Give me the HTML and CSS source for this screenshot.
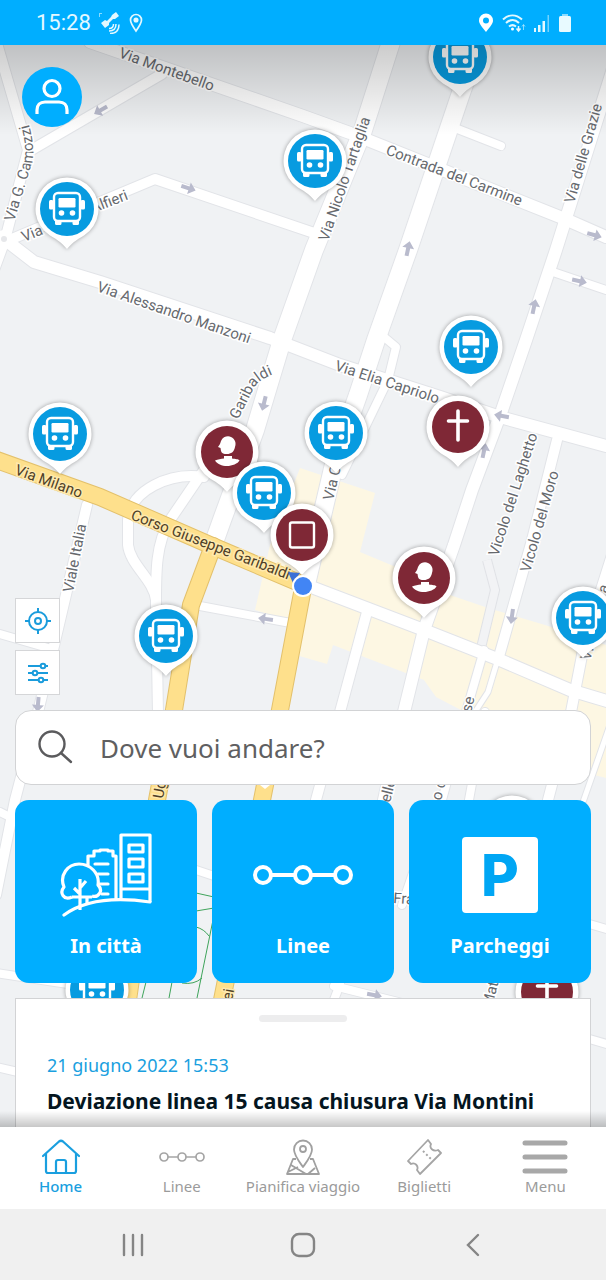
FILE: index.html
```html
<!DOCTYPE html>
<html lang="it">
<head>
  <meta charset="UTF-8" />
  <meta name="viewport" content="width=device-width, initial-scale=1.0"/>
  <title>Home - Mappa</title>
  <link rel="stylesheet" href="styles.css">
</head>
<body>

<header class="status-bar">
  <span class="time">15:28</span>
  <svg width="22" height="22" viewBox="0 0 22 22" fill="none" stroke="#e3f8ff" stroke-width="1.5">
    <g fill="#e3f8ff" stroke="none">
      <path d="M2 11l4-3 2 1 4-4 1-2 4-3 3 4-4 3-2 0-4 4 0 2-4 3z"/>
      <path d="M0 1h3v1H1v3H0z" opacity=".6"/>
    </g>
    <path d="M10 16.500c3 0 4.500-1.500 4.500-4.500M10 19c4.500 0 7-2.500 7-7M11 21.500c5.500 0 9-3 9-9"/>
  </svg>
  <svg width="14" height="20" viewBox="0 0 14 20" fill="none" stroke="#e3f8ff" stroke-width="1.700">
    <path d="M7 18C3.500 13 1.500 10 1.500 7a5.500 5.500 0 0 1 11 0c0 3-2 6-5.500 11z"/>
    <circle cx="7" cy="7" r="1.700" fill="#e3f8ff"/>
  </svg>
  <span class="spacer"></span>
  <svg width="16" height="20" viewBox="0 0 16 20">
    <path fill="#fff" fill-rule="evenodd" d="M8 19C3.500 13.500 1 10.500 1 7.500a7 7 0 0 1 14 0c0 3-2.500 6-7 11.500zM8 4.500a3 3 0 1 0 0 6 3 3 0 0 0 0-6z"/>
  </svg>
  <svg width="24" height="20" viewBox="0 0 24 20" fill="none" stroke="#e3f8ff" stroke-width="2">
    <path d="M1 6.500c6-5.500 13-5.500 19 0M4 10c4.500-4 9-4 13 0M7 13.500c2.500-2 4.500-2 7 0"/>
    <circle cx="10.500" cy="16" r="1.500" fill="#fff" stroke="none"/>
    <path d="M16.500 13v4M14.500 15.500l2 2.500 2-2.500" stroke-width="1.500"/>
    <path d="M21.500 17v-5M20 13.500l1.500-2 1.500 2" stroke-width="1" opacity=".6"/>
  </svg>
  <svg width="16" height="18" viewBox="0 0 16 18" fill="#e3f8ff">
    <path d="M0 14h2v4H0zM4 11h2.500v7H4zM8.500 7H11v11H8.500z"/>
    <path d="M13.500 1H15v17h-1.500z" opacity=".5"/>
  </svg>
  <svg width="14" height="20" viewBox="0 0 14 20" fill="#e8faff">
    <path d="M4 1h6v2H4z" opacity=".6"/>
    <rect x="1" y="3" width="12" height="16" rx="1.500"/>
  </svg>
</header>

<main class="map-screen">
  <svg class="map" viewBox="0 45 606 1082" preserveAspectRatio="xMidYMin slice" role="img" aria-label="Mappa">
    <defs>
      <g id="roads">
        <path class="r12" d="M90 42L303 116 350 133 565 219 606 237"/>
        <path class="r10" d="M-4 40L28 150 5 240-6 270"/>
        <path class="r10" d="M28 152L162 74"/>
        <path class="r10" d="M0 244L155 179 320 235"/>
        <path class="r12" d="M3 238L34 262 100 282 270 338 340 365 440 397 500 417 606 446"/>
        <path class="r18" d="M391 42L363 130 314 250 282 340 255 430 222 520 212 548"/>
        <path class="r18" d="M480 40L462 90 408 250 376 340 358 395 335 460 307 580"/>
        <path class="r8" d="M384 337L396 347 388 380 342 475"/>
        <path class="r8" d="M455 128L501 146"/>
        <path class="r12" d="M622 40L556 250 526 340 502 410 472 490 454 545 424 630 404 712 384 800"/>
        <path class="r8" d="M553 272L606 290"/>
        <path class="r10" d="M87 505L53 650 38 712 15 800-4 895"/>
        <path class="r8" d="M0 634L48 648"/>
        <path class="r10" d="M204 477C170 472 130 490 128 520V545C130 565 154 580 156 600L158 715"/>
        <path class="r10" d="M204 470L170 520C155 545 156 575 156 610"/>
        <path class="r8" d="M200 606L296 624"/>
        <path class="r10" d="M367 612L340 712 316 800"/>
        <path class="r8" d="M484 650L466 712 442 800"/>
        <path class="r10" d="M557 440L532 540 498 660"/>
        <path class="r5" d="M497 662L488 692 475 712"/>
        <path class="r10" d="M612 555L585 640 571 712 548 800"/>
        <path class="r5" d="M610 725L582 805"/>
        <path class="r8" d="M485 712L469 800"/>
        <path class="r12" d="M306 585L424 630 500 660 570 690 610 702"/>
        <path class="r8" d="M0 812L8 816M190 868L214 876M-4 973L68 984M334 986L402 1003M586 923L610 930M-4 1067L18 1072M586 1038L610 1045"/>
        <path class="r8" d="M414 870L402 905M340 984L334 1000"/>
      </g>
      <g id="main-roads">
        <path class="r16" d="M213 546L191 605 174 710 157 800 128 1000"/>
        <path class="r16" d="M303 588L280 710 262 800 222 1000"/>
        <path class="r16" d="M-6 459L100 497 210 545 304 585"/>
      </g>
      <g id="arrow">
        <path d="M-7-2H1V-6L8 0 1 6V2H-7z" fill="#b9bbcd"/>
      </g>
      <g id="pin">
        <path d="M0 40C-4 35-9 31-17 26.500A31.500 31.500 0 1 1 17 26.500C9 31 4 35 0 40z" fill="#fff"/>
      </g>
      <g id="bus">
        <use href="#pin"/>
        <circle r="27" fill="#079be0"/>
        <g fill="#fff">
          <rect x="-13" y="-16" width="26" height="28" rx="4" fill="none" stroke="#fff" stroke-width="2.400"/>
          <rect x="-8.500" y="-11" width="17" height="9.500" rx="1.200"/>
          <rect x="-18" y="-9" width="4.500" height="9.500" rx="1.500"/>
          <rect x="13.500" y="-9" width="4.500" height="9.500" rx="1.500"/>
          <circle cx="-5.500" cy="4" r="2.800"/>
          <circle cx="5.500" cy="4" r="2.800"/>
          <path d="M-12 12h6.500v2.500q0 1.500-1.500 1.500h-3.500q-1.500 0-1.500-1.500zM5.500 12H12v2.500q0 1.500-1.500 1.500H7q-1.500 0-1.500-1.500z"/>
        </g>
      </g>
      <g id="bust">
        <use href="#pin"/>
        <circle r="26" fill="#7f2836"/>
        <path fill="#fff" d="M-6-11C-4-15.500 1-16.500 4-15 8-13 9.500-9 8-5 7 0 4 2 0 2-3 2-5.500 1.500-6-1L-6.500-4-9-5-7-8zM-3 4H5V6.500C8 7 12 7 12.500 8.500 11 11.500 5 14 0 14S-10 12-12 8.500C-9 7-6 7-3 6.500z"/>
      </g>
      <g id="church">
        <use href="#pin"/>
        <circle r="26" fill="#7f2836"/>
        <path d="M0-16V13M-9.500-6H9.500" stroke="#fff" stroke-width="3.600" stroke-linecap="round"/>
      </g>
      <g id="square">
        <use href="#pin"/>
        <circle r="26" fill="#7f2836"/>
        <rect x="-12" y="-12.500" width="24" height="25" rx="2" fill="none" stroke="#fff" stroke-width="2.400"/>
      </g>
      <path id="camozzi" d="M14 222L31 166Q37 150 27 118"/>
      <path id="garibaldi" d="M238 420L254 388Q258 380 274 374"/>
    </defs>

    <rect x="0" y="45" width="606" height="1082" fill="#f0f2f4"/>

    <!-- commercial areas -->
    <g fill="#fdf7e3">
      <path d="M270 545L300 468 375 493 360 552 403 570 450 595 488 608 545 625 606 645V778L575 770 540 745 480 720 436 697 424 680 333 645 327 664 296 655 303 625 255 610z"/>
    </g>
    <path d="M487 560L495 590 480 652" fill="none" stroke="#e0e2e6" stroke-width="10"/>
    <path d="M487 560L495 590 480 652" fill="none" stroke="#f2f3f5" stroke-width="8"/>

    <use href="#roads" class="casing"/>
    <use href="#roads" class="surface"/>
    <use href="#main-roads" class="main-casing"/>
    <use href="#main-roads" class="main-surface"/>
    <circle cx="4" cy="239" r="9" fill="#fff"/>
    <circle cx="4" cy="239" r="3" fill="#e6e7ea"/>

    <!-- footpaths -->
    <g fill="none" stroke="#3fa45b">
      <path d="M196 893L214 897M196 911L214 908M196 927Q204 929 209 936M213 920L197 998M202 978Q194 985 182 983M146 982L142 998M172 982L169 998"/>
    </g>

    <g>
      <use href="#arrow" transform="translate(101 110) rotate(150)"/>
      <use href="#arrow" transform="translate(188 188) rotate(18)"/>
      <use href="#arrow" transform="translate(408 249) rotate(-78)"/>
      <use href="#arrow" transform="translate(594 235) rotate(16)"/>
      <use href="#arrow" transform="translate(579 281) rotate(12)"/>
      <use href="#arrow" transform="translate(534 307) rotate(-78)"/>
      <use href="#arrow" transform="translate(502 416) rotate(190)"/>
      <use href="#arrow" transform="translate(484 451) rotate(-78)"/>
      <use href="#arrow" transform="translate(264 403) rotate(104)"/>
      <use href="#arrow" transform="translate(266 619) rotate(188)"/>
      <use href="#arrow" transform="translate(512 616) rotate(98)"/>
      <use href="#arrow" transform="translate(38 704) rotate(95)"/>
      <use href="#arrow" transform="translate(374 995) rotate(10)"/>
    </g>

    <g class="street">
      <text transform="translate(118 57) rotate(20)">Via Montebello</text>
      <text transform="translate(385 154) rotate(21)">Contrada del Carmine</text>
      <text transform="translate(328 242) rotate(-71)">Via Nicolo Tartaglia</text>
      <text transform="translate(574 204) rotate(-74)">Via delle Grazie</text>
      <text><textPath href="#camozzi">Via G. Camozzi</textPath></text>
      <text transform="translate(24 242) rotate(-22)">Via</text>
      <text transform="translate(93 213) rotate(-21)">Alfieri</text>
      <text transform="translate(96 291) rotate(19)">Via Alessandro Manzoni</text>
      <text><textPath href="#garibaldi">Garibaldi</textPath></text>
      <text transform="translate(334 370) rotate(18)">Via Elia Capriolo</text>
      <text transform="translate(73 593) rotate(-79)">Viale Italia</text>
      <text transform="translate(333 501) rotate(-77)">Via C.</text>
      <text transform="translate(498 557) rotate(-72)">Vicolo del Laghetto</text>
      <text transform="translate(530 573) rotate(-74)">Vicolo del Moro</text>
      <text transform="translate(607 594) rotate(-74)">a</text>
      <text transform="translate(590 661) rotate(-74)">Via</text>
      <text transform="translate(471 713) rotate(-76)">se</text>
      <text transform="translate(390 803) rotate(-76)">elle</text>
      <text transform="translate(441 801) rotate(-76)">o c</text>
      <text transform="translate(393 903) rotate(4)">Fra</text>
      <text transform="translate(492 1008) rotate(-76)">Mat</text>
    </g>
    <g class="street street-main">
      <text transform="translate(14 474) rotate(20)">Via Milano</text>
      <text transform="translate(130 519) rotate(21)">Corso Giuseppe Garibaldi</text>
      <text transform="translate(163 799) rotate(-80)">Ug</text>
      <text transform="translate(232 1001) rotate(-80)">ei</text>
    </g>

    <g class="pins">
      <a href="#" aria-label="Fermata"><use href="#bus" x="460" y="57"/></a>
      <a href="#" aria-label="Fermata"><use href="#bus" x="315" y="161"/></a>
      <a href="#" aria-label="Fermata"><use href="#bus" x="67" y="209"/></a>
      <a href="#" aria-label="Fermata"><use href="#bus" x="471" y="347"/></a>
      <a href="#" aria-label="Fermata"><use href="#bus" x="336" y="433"/></a>
      <a href="#" aria-label="Chiesa"><use href="#church" x="458" y="427"/></a>
      <a href="#" aria-label="Fermata"><use href="#bus" x="60" y="434"/></a>
      <a href="#" aria-label="Museo"><use href="#bust" x="227" y="452"/></a>
      <a href="#" aria-label="Fermata"><use href="#bus" x="264" y="493"/></a>
      <a href="#" aria-label="Piazza"><use href="#square" x="302" y="535"/></a>
      <a href="#" aria-label="Museo"><use href="#bust" x="424" y="578"/></a>
      <a href="#" aria-label="Fermata"><use href="#bus" x="583" y="618"/></a>
      <a href="#" aria-label="Fermata"><use href="#bus" x="166" y="636"/></a>
      <a href="#" aria-label="Fermata"><use href="#bus" x="512" y="827"/></a>
      <a href="#" aria-label="Fermata"><use href="#bus" x="97" y="990"/></a>
      <a href="#" aria-label="Chiesa"><use href="#church" x="547" y="992"/></a>
    </g>

    <!-- user position -->
    <path d="M288 572L300 573 293 583z" fill="#3b6fd6"/>
    <circle cx="303" cy="586" r="11" fill="#fff"/>
    <circle cx="303" cy="586" r="9" fill="#4285f4"/>
    <path d="M260 785L265 789 270 785z" fill="#fff"/>
  </svg>

  <button class="profile-btn" aria-label="Profilo">
    <svg width="36" height="38" viewBox="0 0 36 38" fill="none" stroke="#fff" stroke-width="3.200">
      <circle cx="18" cy="10.500" r="8"/>
      <path d="M3 36v-4c0-5 3-8 8-8h14c5 0 8 3 8 8v4"/>
    </svg>
  </button>

  <div class="panel">
    <div class="map-controls">
      <button aria-label="La mia posizione">
        <svg width="28" height="28" viewBox="0 0 28 28" fill="none" stroke="#1a9cdc" stroke-width="2">
          <circle cx="14" cy="14" r="9"/>
          <circle cx="14" cy="14" r="3"/>
          <path d="M14 1v5M14 22v5M1 14h5M22 14h5"/>
        </svg>
      </button>
      <button aria-label="Filtri">
        <svg width="22" height="22" viewBox="0 0 22 22" stroke="#1a9cdc" stroke-width="2" fill="#fff">
          <path d="M1 4h20M1 11h20M1 18h20"/>
          <circle cx="16" cy="4" r="2.300"/>
          <circle cx="8" cy="11" r="2.300"/>
          <circle cx="14" cy="18" r="2.300"/>
        </svg>
      </button>
    </div>

    <label class="search-box">
      <svg width="36" height="36" viewBox="0 0 36 36" fill="none" stroke="#5b5b5d" stroke-width="2.400" stroke-linecap="round">
        <circle cx="14" cy="14" r="12.500"/>
        <path d="M23 23l10 9"/>
      </svg>
      <input type="text" placeholder="Dove vuoi andare?" aria-label="Dove vuoi andare?">
    </label>

    <div class="tiles">
      <button class="tile">
        <span class="tile-icon">
          <svg width="92" height="84" viewBox="0 0 92 84" fill="none" stroke="#fff" stroke-width="3.200" stroke-linejoin="round">
            <path d="M61 66V2h29v67"/>
            <path d="M69 12h14v7H69zM69 26h14v8H69zM69 41h14v8H69zM61 56h29"/>
            <path d="M28 32V23h6v-5h6v-1h8v1h5v5h3v43"/>
            <path d="M35 31h13M38 41h10M40 51h8M42 61h6" stroke-linecap="round"/>
            <path d="M12 64C4 68-1 60 4 54-1 42 8 31 19 31S40 40 38 52C44 58 38 65 32 63"/>
            <path d="M20 77V46M20 61l-6-6M20 55l6-7M27 72v-9M12 64h20"/>
            <path d="M4 82C26 66 56 64 90 69" stroke-linecap="round"/>
          </svg>
        </span>
        <span>In città</span>
      </button>
      <button class="tile">
        <span class="tile-icon">
          <svg width="100" height="24" viewBox="0 0 100 24" fill="none" stroke="#fff" stroke-width="4">
            <circle cx="10" cy="12" r="8"/>
            <circle cx="50" cy="12" r="8"/>
            <circle cx="90" cy="12" r="8"/>
            <path d="M18 12h24M58 12h24"/>
          </svg>
        </span>
        <span>Linee</span>
      </button>
      <button class="tile">
        <span class="tile-icon"><span class="parking">P</span></span>
        <span>Parcheggi</span>
      </button>
    </div>

    <article class="news">
      <div class="handle"></div>
      <time datetime="2022-06-21T15:53">21 giugno 2022 15:53</time>
      <h2>Deviazione linea 15 causa chiusura Via Montini</h2>
    </article>
  </div>
</main>

<nav class="tab-bar">
  <a href="#" class="active">
    <svg width="38" height="36" viewBox="0 0 38 36" fill="none" stroke="#1a9fdf" stroke-width="2.200" stroke-linejoin="round" stroke-linecap="round">
      <path d="M4 15v17q0 2 2 2h26q2 0 2-2V15"/>
      <path d="M1 17L17 2.500q2-1.500 4 0L37 17"/>
      <path d="M14 34V23q0-2 2-2h6q2 0 2 2v11"/>
    </svg>
    Home
  </a>
  <a href="#">
    <svg width="46" height="36" viewBox="0 0 46 36" fill="none" stroke="#a5a5a5" stroke-width="1.700">
      <circle cx="5" cy="18" r="4"/>
      <circle cx="23" cy="18" r="4"/>
      <circle cx="41" cy="18" r="4"/>
      <path d="M9 18h10M27 18h10"/>
    </svg>
    Linee
  </a>
  <a href="#">
    <svg width="34" height="36" viewBox="0 0 34 36" fill="none" stroke="#a0a0a0" stroke-width="1.800" stroke-linejoin="round">
      <path d="M17 28C12 21 8 16 8 10.500a9 9 0 0 1 18 0C26 16 22 21 17 28z"/>
      <circle cx="17" cy="10" r="3"/>
      <path d="M10 20H7L1 35h32L27 20h-3M5 26l15 9M2 33l10-5M22 35l7-6"/>
    </svg>
    Pianifica viaggio
  </a>
  <a href="#">
    <svg width="36" height="36" viewBox="0 0 36 36" fill="none" stroke="#a5a5a5" stroke-width="1.800" stroke-linejoin="round">
      <path d="M22 1L2 22l3 3c4-2 8 2 6 6l3 4L35 14l-3-3c-5 2-9-2-7-6z"/>
      <path d="M17 12l8 8" stroke-width="2" stroke-dasharray="2 2.500"/>
    </svg>
    Biglietti
  </a>
  <a href="#">
    <svg width="46" height="36" viewBox="0 0 46 36" stroke="#a8a8a8" stroke-width="5" stroke-linecap="round">
      <path d="M3 4h40M3 18h40M3 32h40"/>
    </svg>
    Menu
  </a>
</nav>

<footer class="system-bar">
  <button aria-label="App recenti">
    <svg width="24" height="24" viewBox="0 0 24 24" stroke="#858585" stroke-width="2.400" stroke-linecap="round"><path d="M3 2v20M12 2v20M21 2v20"/></svg>
  </button>
  <button aria-label="Schermata principale">
    <svg width="26" height="26" viewBox="0 0 26 26" fill="none" stroke="#858585" stroke-width="2.400"><rect x="2" y="2" width="22" height="22" rx="7"/></svg>
  </button>
  <button aria-label="Indietro">
    <svg width="24" height="24" viewBox="0 0 24 24" fill="none" stroke="#858585" stroke-width="2.400" stroke-linecap="round"><path d="M17 2L7 12l10 10"/></svg>
  </button>
</footer>

</body>
</html>
```

FILE: styles.css
```css
* {
  box-sizing: border-box;
}

body {
  font-family: "Noto Sans", "Open Sans", sans-serif;
  margin: 0;
  display: flex;
  flex-direction: column;
  min-height: 100vh;
  background-color: #fff;
}

button {
  font-family: inherit;
  border: none;
  padding: 0;
  cursor: pointer;
}

svg {
  display: block;
  flex-shrink: 0;
}

/* status bar */
.status-bar {
  display: flex;
  align-items: center;
  gap: 8px;
  height: 45px;
  padding: 0 34px 0 36px;
  background-color: #00aeff;
}

.time {
  font-family: Roboto, sans-serif;
  font-size: 22px;
  color: #e3f8ff;
}

.spacer {
  flex: 1;
}

/* map */
.map-screen {
  position: relative;
  flex: 1;
  display: flex;
  flex-direction: column;
  justify-content: space-between;
  padding: 22px 15px 0;
  overflow: hidden;
}

.map {
  position: absolute;
  top: 0;
  left: 0;
  width: 100%;
  height: 100%;
}

.map-screen::before {
  content: "";
  position: absolute;
  top: 0;
  left: 0;
  right: 0;
  height: 90px;
  z-index: 1;
  background: linear-gradient(rgba(0,0,0,0.2), rgba(0,0,0,0));
  pointer-events: none;
}

.map-screen::after {
  content: "";
  position: absolute;
  bottom: 0;
  left: 0;
  right: 0;
  height: 16px;
  z-index: 3;
  background: linear-gradient(rgba(0,0,0,0), rgba(0,0,0,0.22));
  pointer-events: none;
}

.casing, .surface, .main-casing, .main-surface {
  fill: none;
  stroke-linejoin: round;
  stroke-linecap: round;
}

.casing {
  --edge: 2px;
  stroke: #e2e4e8;
}

.surface {
  --edge: 0px;
  stroke: #fff;
}

.main-casing {
  --edge: 2px;
  stroke: #e3c16c;
}

.main-surface {
  --edge: 0px;
  stroke: #fee08c;
}

.r5 { stroke-width: calc(5px + var(--edge)); }
.r8 { stroke-width: calc(8px + var(--edge)); }
.r10 { stroke-width: calc(10px + var(--edge)); }
.r12 { stroke-width: calc(12px + var(--edge)); }
.r16 { stroke-width: calc(16px + var(--edge)); }
.r18 { stroke-width: calc(18px + var(--edge)); }

.street {
  font-family: Roboto, sans-serif;
  font-size: 15px;
  fill: #66696e;
  stroke: #fff;
  stroke-width: 3px;
  paint-order: stroke;
}

.street-main {
  fill: #4f3f26;
  stroke: #fee9ae;
}

.pins use {
  filter: drop-shadow(0 0 2px rgba(0,0,0,0.35));
}

.profile-btn {
  position: relative;
  z-index: 2;
  display: flex;
  align-items: center;
  justify-content: center;
  width: 60px;
  height: 60px;
  margin-left: 7px;
  border-radius: 50%;
  background-color: #00aeff;
}

.panel {
  position: relative;
  z-index: 2;
  display: flex;
  flex-direction: column;
  gap: 15px;
}

.map-controls {
  display: flex;
  flex-direction: column;
  align-items: flex-start;
  gap: 7px;
}

.map-controls button {
  display: flex;
  align-items: center;
  justify-content: center;
  width: 45px;
  height: 45px;
  background-color: #fff;
  border: 1px solid #d5d6d8;
}

/* search */
.search-box {
  display: flex;
  align-items: center;
  gap: 26px;
  height: 75px;
  padding: 0 20px 0 22px;
  background-color: #fff;
  border: 1px solid #d2d3d5;
  border-radius: 16px;
}

.search-box input {
  flex: 1;
  min-width: 0;
  padding: 0;
  border: none;
  outline: none;
  background: none;
  font-family: inherit;
  font-size: 26px;
  color: #5f5f61;
}

.search-box input::placeholder {
  color: #5f5f61;
  opacity: 1;
}

/* tiles */
.tiles {
  display: grid;
  grid-template-columns: repeat(3, 1fr);
  gap: 15px;
}

.tile {
  display: flex;
  flex-direction: column;
  align-items: center;
  height: 183px;
  padding-top: 32px;
  border-radius: 14px;
  background-color: #00aeff;
  color: #fff;
  font-size: 20px;
  font-weight: 700;
  line-height: 28px;
}

.tile-icon {
  display: flex;
  align-items: center;
  justify-content: center;
  height: 86px;
  margin-bottom: 14px;
}

.parking {
  display: flex;
  align-items: center;
  justify-content: center;
  width: 76px;
  height: 76px;
  border-radius: 4px;
  background-color: #fff;
  color: #00a6f4;
  font-family: Inter, sans-serif;
  font-size: 58px;
  font-weight: 800;
}

/* news sheet */
.news {
  height: 129px;
  padding: 16px 31px 0;
  background-color: #fff;
  border: 1px solid #d2d3d5;
  border-bottom: none;
  overflow: hidden;
}

.handle {
  width: 88px;
  height: 7px;
  margin: 0 auto 30px;
  border-radius: 4px;
  background-color: #ededee;
}

.news time {
  display: block;
  font-size: 18px;
  line-height: 26px;
  color: #1a9fdf;
}

.news h2 {
  margin: 8px 0 0;
  font-size: 21px;
  font-weight: 700;
  line-height: 30px;
  white-space: nowrap;
  color: #05161f;
}

/* bottom navigation */
.tab-bar {
  display: grid;
  grid-template-columns: repeat(5, 1fr);
  height: 82px;
  padding-top: 12px;
  background-color: #fff;
}

.tab-bar a {
  display: flex;
  flex-direction: column;
  align-items: center;
  font-size: 15px;
  line-height: 22px;
  white-space: nowrap;
  color: #9b9b9b;
  text-decoration: none;
}

.tab-bar .active {
  color: #1a9fdf;
  font-weight: 500;
}

.system-bar {
  display: grid;
  grid-template-columns: repeat(3, 1fr);
  height: 71px;
  padding: 0 8%;
  background-color: #f0f0f0;
}

.system-bar button {
  display: flex;
  align-items: center;
  justify-content: center;
  background: none;
}
```
